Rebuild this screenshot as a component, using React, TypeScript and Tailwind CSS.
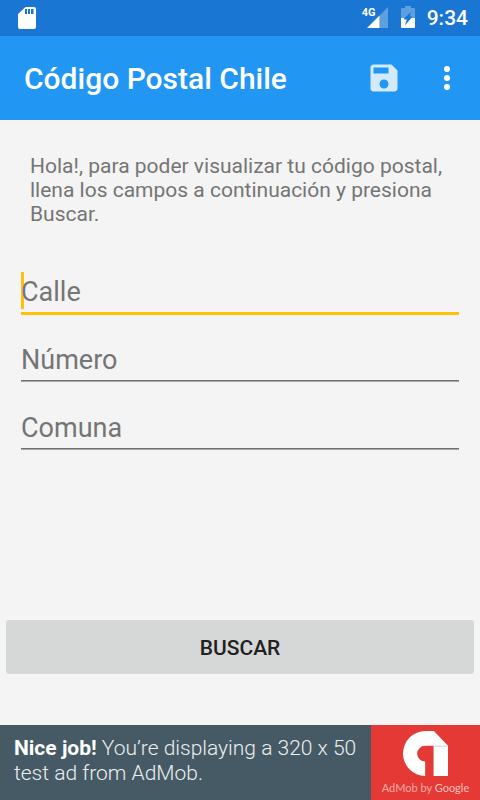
import { useState } from 'react'
import type { FormEvent } from 'react'

interface Field {
  id: string
  label: string
}

const FIELDS: Field[] = [
  { id: 'calle', label: 'Calle' },
  { id: 'numero', label: 'Número' },
  { id: 'comuna', label: 'Comuna' },
]

function SdCardIcon() {
  return (
    <svg viewBox="0 0 18 22" className="h-[22px] w-[18px] fill-white" aria-hidden="true">
      <path
        fillRule="evenodd"
        d="M7.5 0H16q2 0 2 2v18q0 2-2 2H2q-2 0-2-2V7zM7 2v5h2V2zM10 2v5h2V2zM13 2v5h2.5V2z"
      />
    </svg>
  )
}

function SignalIcon() {
  return (
    <svg viewBox="0 0 21 21" className="h-[21px] w-[21px] fill-white" aria-hidden="true">
      <path d="M12.5 8.5L21 0v21h-8.5z" opacity=".3" />
      <path d="M0 21L12.5 8.5V21z" />
    </svg>
  )
}

function BatteryIcon() {
  return (
    <svg viewBox="0 0 14 22" className="h-[22px] w-[14px] fill-white" aria-hidden="true">
      <path d="M4 0h6v2h3q1 0 1 1v9h-3.6l.8-1.5H8.8L10.2 6 3.4 12H0V3q0-1 1-1h3z" opacity=".3" />
      <path d="M0 12h3.2v1.4h2.6L3.8 19.4 10.4 12H14v9q0 1-1 1H1q-1 0-1-1z" />
    </svg>
  )
}

function SaveIcon() {
  return (
    <svg viewBox="0 0 24 24" className="size-9 fill-white/80" aria-hidden="true">
      <path d="M17 3H5c-1.11 0-2 .9-2 2v14c0 1.1.89 2 2 2h14c1.1 0 2-.9 2-2V7l-4-4zm-5 16c-1.66 0-3-1.34-3-3s1.34-3 3-3 3 1.34 3 3-1.34 3-3 3zm3-10H5V5h10v4z" />
    </svg>
  )
}

function MoreIcon() {
  return (
    <svg viewBox="0 0 24 24" className="size-9 fill-white" aria-hidden="true">
      <circle cx="12" cy="6" r="2" />
      <circle cx="12" cy="12" r="2" />
      <circle cx="12" cy="18" r="2" />
    </svg>
  )
}

function AdMobLogo() {
  return (
    <svg viewBox="0 0 134 134" className="size-[45px]" aria-hidden="true">
      <path
        fill="#fff"
        d="M67 0H92L134 44V134H91V44H66A24 24 0 0 0 42 68A24 24 0 0 0 66 91V134A67 67 0 0 1 0 67A67 67 0 0 1 67 0Z"
      />
      <path fill="#dcdcdc" d="M91 43h43v4H91z" />
    </svg>
  )
}

function StatusBar() {
  return (
    <div className="flex h-9 items-center justify-between bg-[#1976d2] pr-3 pl-[18px] text-white">
      <SdCardIcon />
      <div className="flex items-center">
        <div className="relative pb-px pl-[5px]">
          <span className="absolute top-0 left-0 text-[11px] leading-[11px] font-bold">4G</span>
          <SignalIcon />
        </div>
        <div className="ml-[13px] pb-0.5">
          <BatteryIcon />
        </div>
        <span className="ml-3 text-[21px] leading-6 font-medium">9:34</span>
      </div>
    </div>
  )
}

function AdBanner() {
  return (
    <a href="#admob" className="flex h-[75px] bg-[#455a64]">
      <p className="flex-1 pt-[11px] pl-[14px] text-[21px] leading-[25px] font-light text-[#eceff1]">
        <strong className="font-bold text-white">Nice job!</strong> You’re displaying a 320 x 50 test ad from AdMob.
      </p>
      <div className="flex w-[109px] shrink-0 flex-col items-center bg-[#e53935] pt-1.5">
        <AdMobLogo />
        <span className="mt-1 font-['Lato',sans-serif] text-[11px] leading-4 whitespace-nowrap text-[#f5aaa8]">
          AdMob by <span className="text-[#f8c0be]">Google</span>
        </span>
      </div>
    </a>
  )
}

export default function App() {
  const [values, setValues] = useState<Record<string, string>>({})
  const [active, setActive] = useState('calle')

  function handleSubmit(e: FormEvent) {
    e.preventDefault()
  }

  return (
    <div className="flex min-h-screen flex-col bg-[#f4f4f4] font-['Roboto',sans-serif]">
      <StatusBar />

      <header className="flex h-[84px] items-center bg-[#2196f3] pr-[15px] pl-6">
        <h1 className="flex-1 pt-0.5 text-[30px] leading-9 font-medium text-white">Código Postal Chile</h1>
        <div className="flex gap-[27px]">
          <button type="button" aria-label="Guardar">
            <SaveIcon />
          </button>
          <button type="button" aria-label="Más opciones">
            <MoreIcon />
          </button>
        </div>
      </header>

      <main className="flex flex-1 flex-col pt-[34px]">
        <p className="px-[30px] text-[21px] leading-6 text-[#757575]">
          Hola!, para poder visualizar tu código postal, llena los campos a continuación y presiona Buscar.
        </p>

        <form onSubmit={handleSubmit} className="flex flex-1 flex-col pt-[22px]">
          {FIELDS.map((field) => {
            const isActive = field.id === active
            return (
              <div key={field.id} className="relative h-[68px] px-[21px] pt-6">
                {isActive && !values[field.id] && <span className="absolute top-6 left-[21px] h-[37px] w-[3px] bg-[#ffc107]" />}
                <input
                  id={field.id}
                  aria-label={field.label}
                  value={values[field.id] ?? ''}
                  placeholder={field.label}
                  onFocus={() => setActive(field.id)}
                  onChange={(e) => setValues({ ...values, [field.id]: e.target.value })}
                  className={
                    isActive
                      ? 'relative block h-[43px] w-full border-b-3 border-[#ffc107] text-[27px] text-[#212121] caret-[#ffc107] outline-none placeholder:text-[#757575]'
                      : 'relative block h-[41px] w-full border-b border-[#717171] text-[27px] text-[#212121] shadow-[0_1px_0_#a6a6a6] outline-none placeholder:text-[#757575]'
                  }
                />
              </div>
            )
          })}

          <button
            type="submit"
            className="mx-1.5 mt-auto mb-[51px] h-[54px] rounded-[3px] bg-[#d6d8d7] pt-[3px] text-[21px] font-medium text-[#212121]"
          >
            BUSCAR
          </button>
        </form>
      </main>

      <AdBanner />
    </div>
  )
}
